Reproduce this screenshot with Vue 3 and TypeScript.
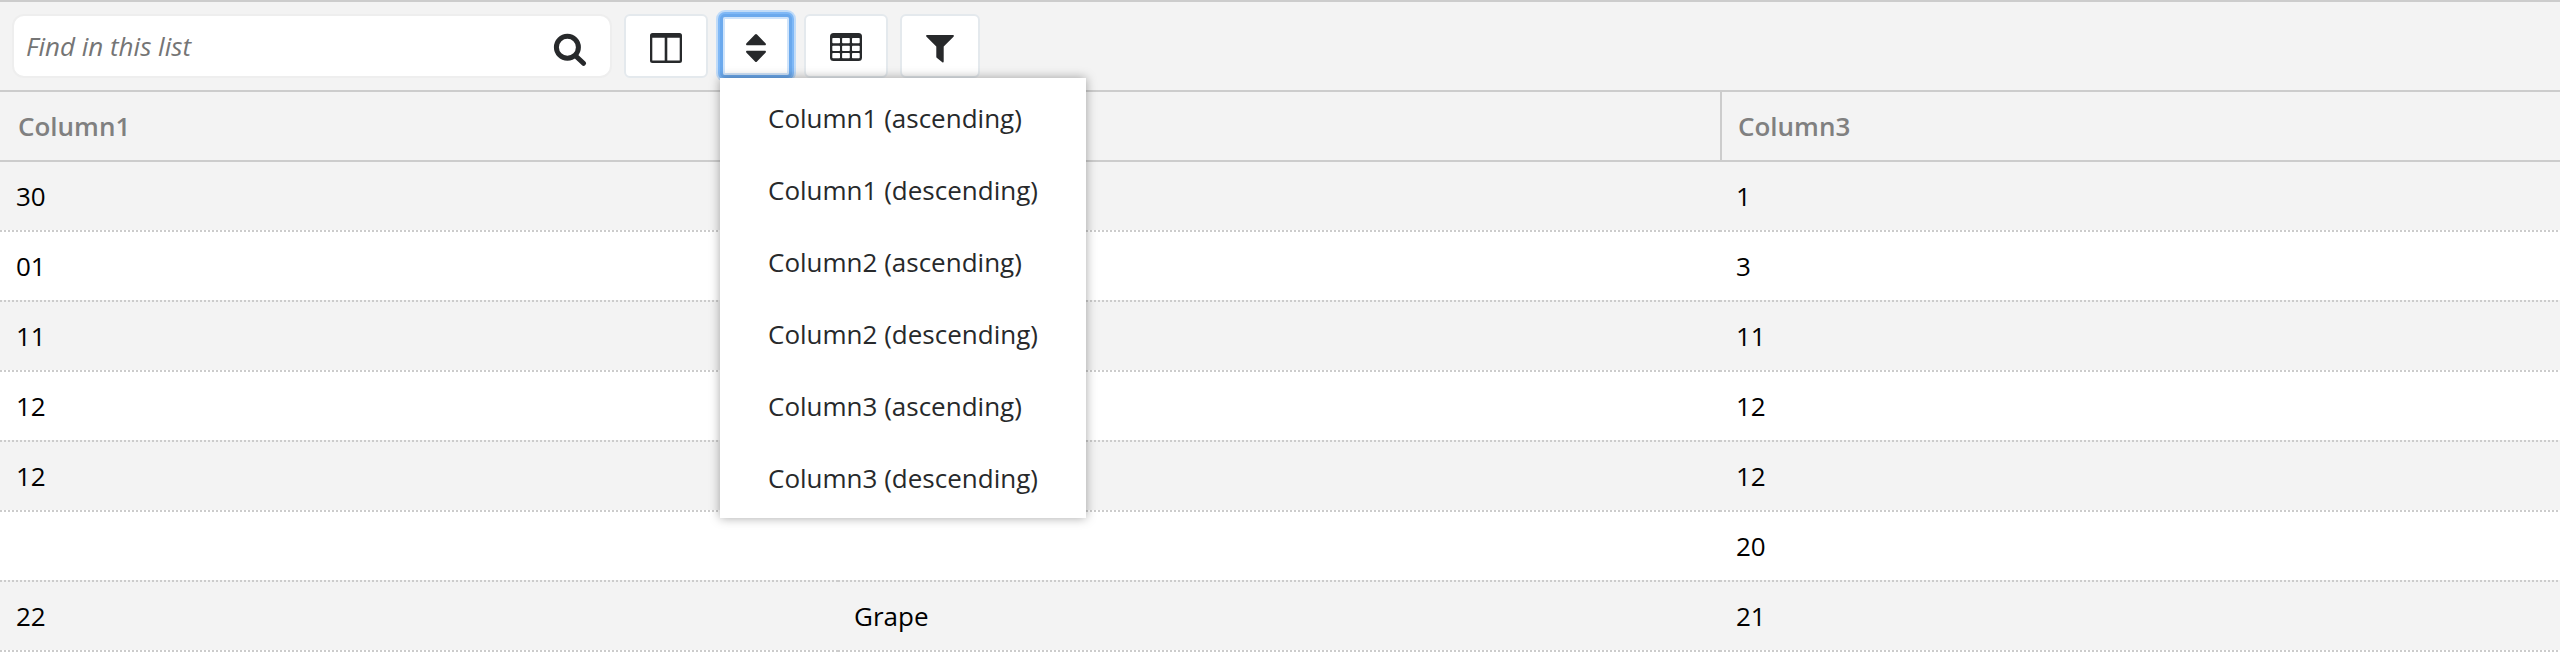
<script setup lang="ts">
interface Row {
  column1: string
  column2: string
  column3: string
}

const rows: Row[] = [
  { column1: '30', column2: '', column3: '1' },
  { column1: '01', column2: '', column3: '3' },
  { column1: '11', column2: '', column3: '11' },
  { column1: '12', column2: '', column3: '12' },
  { column1: '12', column2: '', column3: '12' },
  { column1: '', column2: '', column3: '20' },
  { column1: '22', column2: 'Grape', column3: '21' },
]

const headers: string[] = ['Column1', '', 'Column3']

const sortOptions: string[] = ['Column1', 'Column2', 'Column3'].flatMap((name) => [
  `${name} (ascending)`,
  `${name} (descending)`,
])
</script>

<template>
  <div class="list-view">
    <div class="toolbar">
      <div class="search">
        <input class="search-input" type="text" placeholder="Find in this list" />
        <svg class="search-icon" width="34" height="34" viewBox="0 0 34 34">
          <circle cx="14.400" cy="14.300" r="11" fill="none" stroke="#27292b" stroke-width="5" />
          <path d="M23 23.200 30.500 30.300" stroke="#27292b" stroke-width="5" stroke-linecap="round" />
        </svg>
      </div>

      <button class="tool columns" type="button" aria-label="Columns">
        <svg width="32" height="30" viewBox="0 0 32 30">
          <path
            fill="#27292b"
            fill-rule="evenodd"
            d="M2.5 0h27A2.5 2.5 0 0 1 32 2.500v25a2.500 2.500 0 0 1-2.500 2.500h-27A2.500 2.500 0 0 1 0 27.500v-25A2.500 2.500 0 0 1 2.500 0ZM2.300 4.700V27.600H14.700V4.700ZM17.300 4.700V27.600H29.700V4.700Z"
          />
        </svg>
      </button>

      <div class="sort">
        <button class="tool sort-button" type="button" aria-label="Sort">
          <svg width="20" height="28" viewBox="0 0 20 28">
            <path
              fill="#27292b"
              d="M9 .6a1.400 1.400 0 0 1 2 0L19.500 9.300C20.300 10.200 19.900 11.300 18.900 11.300H1.100C.1 11.300-.3 10.200.5 9.300ZM9 27.400a1.400 1.400 0 0 0 2 0L19.500 18.700C20.300 17.800 19.900 16.700 18.900 16.700H1.100C.1 16.700-.3 17.800.5 18.700Z"
            />
          </svg>
        </button>
        <ul class="menu">
          <li v-for="option in sortOptions" :key="option" class="menu-item">{{ option }}</li>
        </ul>
      </div>

      <button class="tool grid" type="button" aria-label="Grid">
        <svg width="32" height="28" viewBox="0 0 32 28">
          <rect width="32" height="28" rx="3.500" fill="#27292b" />
          <g fill="#fff">
            <template v-for="y in [5, 12.700, 20]" :key="y">
              <rect v-for="x in [2.300, 12.100, 22]" :key="x" :x="x" :y="y" width="7.700" height="5.300" rx="0.700" />
            </template>
          </g>
        </svg>
      </button>

      <button class="tool filter" type="button" aria-label="Filter">
        <svg width="28" height="28" viewBox="0 0 28 28">
          <path fill="#27292b" d="M1 0H27C28 0 28.200 1 27.500 1.700L17.700 11.500V26.500C17.700 27.400 17 27.700 16.300 27.200L11 23C10.500 22.600 10.300 22.300 10.300 21.700V11.500L.5 1.700C-.2 1 0 0 1 0Z" />
        </svg>
      </button>
    </div>

    <div class="row head">
      <div v-for="(header, index) in headers" :key="index" class="cell">{{ header }}</div>
    </div>

    <div v-for="(row, index) in rows" :key="index" class="row body">
      <div class="cell">{{ row.column1 }}</div>
      <div class="cell">{{ row.column2 }}</div>
      <div class="cell">{{ row.column3 }}</div>
    </div>
    <div class="row closing">
      <div v-for="(header, index) in headers" :key="index" class="cell"></div>
    </div>
  </div>
</template>

<style>
body {
  margin: 0;
  background: #fff;
}
</style>

<style scoped>
.list-view {
  height: 652px;
  overflow: hidden;
  font-family: 'Open Sans', 'Noto Sans', sans-serif;
  font-size: 26px;
  color: #000;
}

.toolbar {
  box-sizing: border-box;
  display: flex;
  gap: 12px;
  height: 90px;
  padding: 12px;
  border-top: 2px solid #ccc;
  background: #f3f3f3;
}

.search {
  box-sizing: border-box;
  display: flex;
  align-items: center;
  justify-content: space-between;
  width: 600px;
  height: 64px;
  padding: 0 23px 0 12px;
  border: 2px solid #eee;
  border-radius: 12px;
  background: #fff;
}

.search-input {
  flex: 1;
  min-width: 0;
  height: 58px;
  padding: 0;
  border: 0;
  outline: 0;
  background: transparent;
  font: italic 26px 'Open Sans', sans-serif;
}

.search-input::placeholder {
  color: #757575;
  opacity: 1;
}

.search-icon {
  margin-top: 8px;
}

.tool {
  box-sizing: border-box;
  display: flex;
  align-items: center;
  justify-content: center;
  width: 84px;
  height: 64px;
  padding: 3px 0 0;
  border: 2px solid #e4e9ed;
  border-radius: 6px;
  background: #fff;
}

.sort {
  position: relative;
}

.sort-button {
  width: 72px;
  border: 3px solid #6ba9ed;
  border-radius: 5px;
  box-shadow:
    inset 0 0 0 2px #cfe4fb,
    0 0 0 2px #7fb8f6,
    0 0 0 4px #c0dbf8;
}

.grid {
  padding-top: 1px;
}

.filter {
  width: 80px;
  padding-top: 5px;
}

.menu {
  position: absolute;
  z-index: 1;
  top: 64px;
  left: 0;
  box-sizing: border-box;
  width: 366px;
  height: 440px;
  margin: 0;
  padding: 4px 0;
  list-style: none;
  background: #fff;
  box-shadow: 0 0 10px rgba(0, 0, 0, 0.35);
  color: #27292b;
}

.menu-item {
  height: 72px;
  padding-left: 48px;
  line-height: 72px;
  white-space: nowrap;
}

.row {
  display: grid;
  grid-template-columns: 838px 882px 840px;
  height: 70px;
}

.cell {
  box-sizing: border-box;
  padding-left: 16px;
  line-height: 68px;
}

.head {
  border-top: 2px solid #ccc;
  height: 68px;
  background: #f3f3f3;
  color: #808080;
  font-weight: 600;
}

.head .cell {
  padding-left: 18px;
}

.head .cell + .cell {
  padding-left: 16px;
  border-left: 2px solid #ccc;
}

.body .cell,
.closing .cell {
  padding-top: 2px;
  background-image: repeating-linear-gradient(to right, #ccc 0 2px, transparent 2px 4px);
  background-repeat: no-repeat;
  background-size: 100% 2px;
}

.closing {
  height: 2px;
}

.body:nth-child(odd) {
  background-color: #f3f3f3;
}

.head + .body .cell {
  background: linear-gradient(#ccc, #ccc) no-repeat 0 0 / 100% 2px;
}
</style>
